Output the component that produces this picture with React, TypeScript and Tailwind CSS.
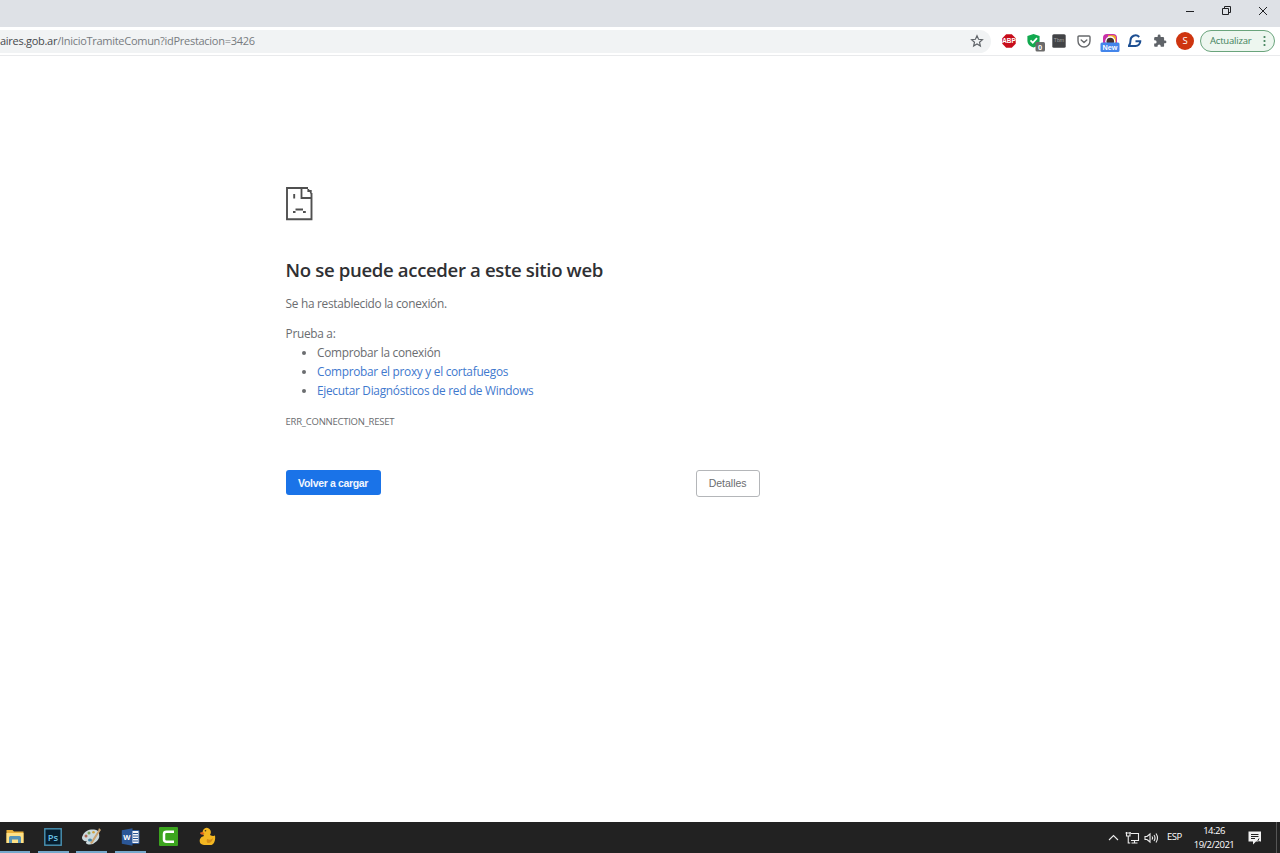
import type { ReactNode } from "react";

const links = ["Comprobar el proxy y el cortafuegos", "Ejecutar Diagnósticos de red de Windows"];

function SadFile() {
  return (
    <svg width="27" height="34" viewBox="0 0 27 34" fill="none" stroke="#505050" strokeWidth="1.9">
      <path d="M22 1H1v31.2h24.500V6" />
      <path d="M15.5 1v10h10M22.3 2v2h2.500v2.500" strokeWidth="1.8" />
      <path d="M8.2 7v4.500M9.5 22.500h7.500" />
      <path d="M7 25h2.500M17 25h2.800" />
    </svg>
  );
}

function Star() {
  return (
    <svg width="14" height="14" viewBox="0 0 24 24" fill="none" stroke="#5f6368" strokeWidth="2">
      <path d="m12 3 2.7 6.1 6.6.6-5 4.4 1.5 6.5-5.8-3.4-5.8 3.4 1.5-6.5-5-4.4 6.6-.6Z" />
    </svg>
  );
}

function AdBlock() {
  return (
    <svg width="14" height="14" viewBox="0 0 14 14">
      <path d="M4.2.3h5.6l3.9 3.9v5.6l-3.9 3.9H4.2L.3 9.8V4.2Z" fill="#c70d1b" />
      <text x="7" y="9.3" fill="#fff" fontSize="6.4" fontWeight="700" textAnchor="middle" fontFamily="Liberation Sans, sans-serif">
        ABP
      </text>
    </svg>
  );
}

function Shield() {
  return (
    <svg width="18" height="18" viewBox="0 0 18 18">
      <path d="M6.5 0 12.6 2v4.2c0 4-2.6 6-6.1 7.3C3 12.2.4 10.2.4 6.2V2Z" fill="#12a94f" />
      <path d="m3.5 6.3 2.3 2.4L10 4.2" fill="none" stroke="#fff" strokeWidth="1.7" />
      <rect x="8.5" y="8" width="9.5" height="9.5" rx="1.5" fill="#6b6b6b" />
      <text x="13.2" y="15.5" fill="#fff" fontSize="7.5" fontWeight="700" textAnchor="middle" fontFamily="Liberation Sans, sans-serif">
        0
      </text>
    </svg>
  );
}

function DarkTile() {
  return (
    <svg width="14" height="14" viewBox="0 0 14 14">
      <rect x=".3" y=".3" width="13.4" height="13.4" rx="1.5" fill="#424346" />
      <text x="7" y="8.2" fill="#a5a5a5" fontSize="5" textAnchor="middle" fontFamily="Liberation Sans, sans-serif">
        Tbrn
      </text>
    </svg>
  );
}

function Pocket() {
  return (
    <svg width="14" height="13" viewBox="0 0 14 13" fill="none" stroke="#67696c" strokeWidth="1.4" strokeLinecap="round" strokeLinejoin="round">
      <path d="M2 1h10q1 0 1 1v4A6 6 0 0 1 1 6V2Q1 1 2 1Z" />
      <path d="m4.2 5 2.8 2.6L9.8 5" />
    </svg>
  );
}

function Rainbow() {
  return (
    <svg width="20" height="18" viewBox="0 0 20 18">
      <path d="M3 11V4q0-4 4-4h6q4 0 4 4v7Z" fill="#c831a8" />
      <path d="M8 1.2h5.500q2.500 0 2.500 3v7H8Z" fill="#efac22" />
      <circle cx="10.3" cy="7.3" r="5" fill="#fff" />
      <circle cx="10.3" cy="7.5" r="3.8" fill="#442f2e" />
      <rect x=".5" y="8.5" width="19" height="9.5" rx="1.5" fill="#4385eb" />
      <text x="10" y="15.9" fill="#fff" fontSize="7.2" fontWeight="700" textAnchor="middle" fontFamily="Liberation Sans, sans-serif">
        New
      </text>
    </svg>
  );
}

function BlueG() {
  return (
    <svg width="14" height="14" viewBox="0 0 14 14" fill="none" stroke="#1d4f92" strokeWidth="2">
      <path d="M11.2 3A5 5 0 0 0 2.500 6.500Q2.500 10 .8 12H7.500A4.700 4.700 0 0 0 12.300 7.200H7.500" />
    </svg>
  );
}

function Puzzle() {
  return (
    <svg width="14" height="14" viewBox="0 0 24 24" fill="#5f6368">
      <path d="M20.5 11H19V7a2 2 0 0 0-2-2h-4V3.5a2.5 2.5 0 0 0-5 0V5H4a2 2 0 0 0-2 2v3.8h1.5a2.7 2.7 0 0 1 0 5.4H2V20c0 1.1.9 2 2 2h3.8v-1.5a2.7 2.7 0 0 1 5.4 0V22H17a2 2 0 0 0 2-2v-4h1.5a2.5 2.5 0 0 0 0-5Z" />
    </svg>
  );
}

function WindowControls() {
  return (
    <svg width="82" height="12" viewBox="0 0 82 12" fill="none" stroke="#202124" strokeWidth="1">
      <path d="M0 6.5h8M73 2l8 8m0-8-8 8" />
      <path d="M36.5 3.5h6v6h-6zM38.5 3.5v-2h6v6h-2" />
    </svg>
  );
}

function Explorer() {
  return (
    <svg width="18" height="15" viewBox="0 0 18 15">
      <path d="M.5 1h6L8 2.5h9.5V14H.5Z" fill="#e9b13a" />
      <path d="M.5 4h17v10H.5Z" fill="#ffe286" />
      <path d="M3 14V8.5Q3 7 4.500 7h9Q15 7 15 8.500V14h-3v-3.500H6V14Z" fill="#5694b7" />
    </svg>
  );
}

function Photoshop() {
  return (
    <svg width="18" height="18" viewBox="0 0 18 18">
      <rect x=".8" y=".8" width="16.4" height="16.4" fill="#071d2d" stroke="#4b94b5" strokeWidth="1.4" />
      <text x="9" y="12.5" fill="#65bfe2" fontSize="9.5" fontWeight="600" textAnchor="middle" fontFamily="Open Sans, sans-serif">
        Ps
      </text>
    </svg>
  );
}

function Paint() {
  return (
    <svg width="21" height="20" viewBox="0 0 21 20">
      <path d="M2 8C4 3 12 1 17 4q3 6-1 10-5 5-10 3-2-1 0-3-2 1-4-1Q0 11 2 8Z" fill="#cbd9dd" />
      <path d="m9 16 8-12 1-3 2 2-2 3-7 11Z" fill="#c9a271" />
      <circle cx="5" cy="9" r="1.5" fill="#ad6653" />
      <circle cx="8" cy="6" r="1.5" fill="#7a9e5d" />
      <circle cx="12.5" cy="5.3" r="1.3" fill="#d0a33e" />
      <ellipse cx="9" cy="13" rx="2" ry="1.5" fill="#4687a7" />
    </svg>
  );
}

function Word() {
  return (
    <svg width="19" height="18" viewBox="0 0 19 18">
      <path d="M10 2.5h8v13h-8Z" fill="#f5f7fb" stroke="#2b5797" />
      <path d="M12 5.5h5m-5 2.5h5m-5 2.5h5m-5 2.5h5" stroke="#2b5797" />
      <path d="m.8 2.2 10.7-2v17.6L.8 15.8Z" fill="#2b5797" />
      <text x="6" y="12" fill="#fff" fontSize="7.5" fontWeight="700" textAnchor="middle" fontFamily="Open Sans, sans-serif">
        W
      </text>
    </svg>
  );
}

function Camtasia() {
  return (
    <svg width="19" height="19" viewBox="0 0 19 19">
      <rect width="19" height="19" rx="1" fill="#3ca51e" />
      <path d="M15 4.8H7.5Q5 4.8 5 7v5.5q0 2.2 2.5 2.2H15" fill="none" stroke="#fff" strokeWidth="2.5" />
    </svg>
  );
}

function Duck() {
  return (
    <svg width="17" height="19" viewBox="0 0 17 19">
      <path d="M5 9Q2.5 5 4.5 2.5 7-.5 10.5 2q2.5 2.5.5 6 3 1.5 5 .5 1 7-3.5 9.500H5Q-.5 17 1 12q1-2.500 4-3Z" fill="#f3b722" />
      <path d="M4 5Q0 5 1.5 7q2 1.5 4 0Z" fill="#e2671d" />
      <path d="M8 12q4 2 6-1-1 5-5 5-2-1-1-4Z" fill="#d58d16" />
      <circle cx="6.5" cy="3.8" r=".8" fill="#40301d" />
    </svg>
  );
}

function TrayIcons() {
  return (
    <svg width="51" height="16" viewBox="0 0 51 16" fill="none" stroke="#ededed" strokeWidth="1.1">
      <path d="m1 10 4.5-4.5L10 10" />
      <path d="M23 3.5h7.5v7H23M26.5 10.5V13m-3 0h6M18.5 2v4H22V2m-1.750 4v7h2M17.500 3H23" />
      <path d="M37 6.5h2L42 4v8l-3-2.5h-2ZM44 6.5q1.2 1.500 0 3M46 5q2 3 0 6M48 3.500q3 4.500 0 9" />
    </svg>
  );
}

function Notification() {
  return (
    <svg width="14" height="14" viewBox="0 0 14 14">
      <path d="M.5 .5H13v10H8l-3 3v-3H.5Z" fill="#f2f2f2" />
      <path d="M3 3.5h7.5M3 5.5h7.5M3 7.5h4" stroke="#222" />
      <path d="M11 7.5q-2.500 2 1 4" stroke="#222" fill="none" />
    </svg>
  );
}

function TaskItem({ children, open }: { children: ReactNode; open?: boolean }) {
  return (
    <div className={`flex h-[31px] w-[31px] items-center justify-center border-b-2 ${open ? "border-[#76a9cc]" : "border-transparent"}`}>
      {children}
    </div>
  );
}

export default function App() {
  return (
    <div className="flex h-[853px] w-[1280px] flex-col overflow-hidden bg-white font-['Open_Sans',sans-serif]">
      <div className="flex h-[27px] shrink-0 justify-end bg-[#dee1e6] pt-[5px] pr-[12px]">
        <WindowControls />
      </div>
      <header className="flex h-[29px] shrink-0 items-center border-b border-[#e9eaec] pr-[5px]">
        <div className="flex h-[23px] w-[991px] items-center justify-between rounded-r-full bg-[#f1f3f4] pr-[7px]">
          <span className="text-[11px] leading-4 tracking-[-0.28px] whitespace-nowrap text-[#777b80]">
            <span className="text-[#46494d]">aires.gob.ar</span>/InicioTramiteComun?idPrestacion=3426
          </span>
          <Star />
        </div>
        <div className="ml-[11px] flex flex-1 items-center">
          <div className="w-[25px]"><AdBlock /></div>
          <div className="w-[25px] pt-[3px]"><Shield /></div>
          <div className="w-[25px]"><DarkTile /></div>
          <div className="w-[23px]"><Pocket /></div>
          <div className="w-[28px] pt-1"><Rainbow /></div>
          <div className="w-[25px]"><BlueG /></div>
          <div className="w-[23px]"><Puzzle /></div>
          <div className="flex size-[18px] items-center justify-center rounded-full bg-[#ce3510] text-[9.5px] text-white">S</div>
        </div>
        <button className="flex h-[22px] w-[75px] items-center justify-between rounded-full border border-[#6aa47c] bg-[#edf6ef] pr-[8px] pl-[9px] text-[9.5px] tracking-[-0.2px] text-[#41815a]">
          Actualizar
          <svg width="3" height="12" fill="#41815a">
            <circle cx="1.5" cy="2" r="1.1" />
            <circle cx="1.5" cy="6" r="1.1" />
            <circle cx="1.5" cy="10" r="1.1" />
          </svg>
        </button>
      </header>

      <main className="ml-[285.6px] w-[474px] flex-1 pt-[131px] text-[11.85px] leading-[19px] text-[#6b6d70]">
        <SadFile />
        <h1 className="mt-[37px] text-[18.6px] leading-6 font-semibold tracking-[-0.36px] whitespace-nowrap text-[#2f3033]">
          No se puede acceder a este sitio web
        </h1>
        <p className="mt-3 tracking-[-0.29px]">Se ha restablecido la conexión.</p>
        <p className="mt-[11px] tracking-[-0.29px]">Prueba a:</p>
        <ul className="list-disc pl-[31.4px] tracking-[-0.28px]">
          <li>Comprobar la conexión</li>
          {links.map((link) => (
            <li key={link}>
              <a href="#" className="text-[#3f79ce]">{link}</a>
            </li>
          ))}
        </ul>
        <p className="mt-3 text-[9.5px] tracking-[-0.25px]">ERR_CONNECTION_RESET</p>
        <div className="mt-[39px] flex items-start justify-between font-['Liberation_Sans',sans-serif] text-[10.5px]">
          <button className="h-[25px] w-[95px] rounded-[3px] bg-[#1a73e8] pt-px font-bold tracking-[-0.34px] whitespace-nowrap text-[#f1f6fe]">
            Volver a cargar
          </button>
          <button className="h-[27px] w-[64px] rounded-[3px] border border-[#b4b6b9] text-[#6b6d70]">Detalles</button>
        </div>
      </main>

      <footer className="flex h-[31px] shrink-0 items-center justify-between bg-[#222222] text-white">
        <div className="-ml-px flex gap-[7.6px]">
          <TaskItem open><Explorer /></TaskItem>
          <TaskItem open><Photoshop /></TaskItem>
          <TaskItem open><Paint /></TaskItem>
          <TaskItem open><Word /></TaskItem>
          <TaskItem><Camtasia /></TaskItem>
          <TaskItem><Duck /></TaskItem>
        </div>
        <div className="flex h-full items-center">
          <TrayIcons />
          <span className="ml-[8px] w-[16px] text-[9.5px] tracking-[-0.5px]">ESP</span>
          <div className="ml-[9px] w-[44px] text-center text-[9.5px] leading-[14px] tracking-[-0.5px]">
            <div>14:26</div>
            <div>19/2/2021</div>
          </div>
          <div className="ml-[12px]"><Notification /></div>
          <div className="ml-[14px] h-full w-[4px] border-l border-[#555]" />
        </div>
      </footer>
    </div>
  );
}
